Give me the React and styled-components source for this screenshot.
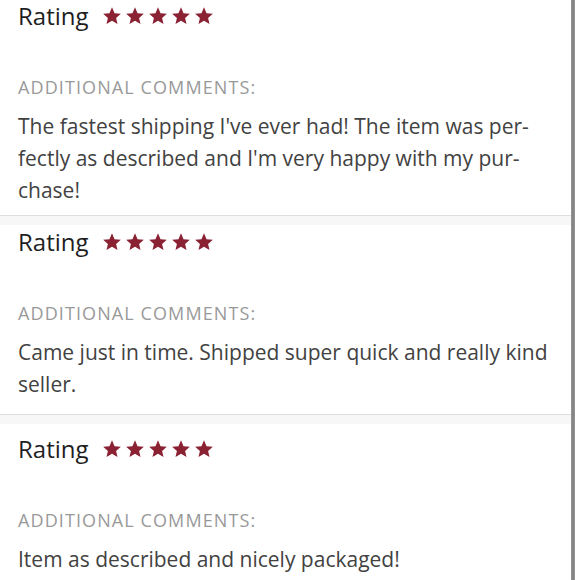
import React from "react";
import styled, { createGlobalStyle } from "styled-components";

const Global = createGlobalStyle`
  html, body { margin: 0; padding: 0; background: #ffffff; }
  body { font-family: "Open Sans", "Liberation Sans", sans-serif; overflow: hidden; }
`;

const Page = styled.div`
  display: flex;
  align-items: flex-start;
  width: 580px;
  height: 580px;
  overflow: hidden;
  background: #ffffff;
`;

const List = styled.div`
  width: 571px;
  flex: none;
  display: flex;
  flex-direction: column;
  & > * { flex-shrink: 0; }
`;

const Rail = styled.div`
  width: 4px;
  height: 580px;
  flex: none;
  background: linear-gradient(to right, #9a9a9a, #7e7e7e 50%, #9a9a9a);
`;

const Card = styled.section`
  padding: ${(p) => p.$top || 0}px 18px ${(p) => p.$bottom || 0}px 18px;
  background: #ffffff;
`;

const Separator = styled.div`
  height: 9px;
  border-top: 1px solid #dedede;
  background: #f7f7f7;
`;

const RatingRow = styled.div`
  display: flex;
  align-items: center;
  height: 32px;
`;

const RatingLabel = styled.span`
  font-size: 24px;
  line-height: 32px;
  color: #1f1f1f;
  margin-right: 13px;
`;

const Stars = styled.div`
  display: flex;
  gap: 3px;
`;

const Label = styled.div`
  margin-top: 43px;
  font-size: 18px;
  font-weight: 500;
  line-height: 24px;
  letter-spacing: 1.1px;
  color: #999999;
  text-transform: uppercase;
  white-space: nowrap;
`;

const Comment = styled.p`
  margin: 11px 0 0 0;
  font-size: 21px;
  line-height: 32px;
  color: #424242;
  white-space: nowrap;
`;

const Star = () => (
  <svg width="20" height="20" viewBox="0 0 24 24" aria-hidden="true">
    <path
      d="M12 1.6l3.05 6.95 7.55.7-5.7 5 1.7 7.4L12 17.75 5.4 21.65l1.7-7.4-5.7-5 7.55-.7z"
      fill="#8a2234"
    />
  </svg>
);

const reviews = [
  {
    lines: [
      "The fastest shipping I've ever had! The item was per-",
      "fectly as described and I'm very happy with my pur-",
      "chase!",
    ],
    top: 0,
    bottom: 9,
  },
  {
    lines: ["Came just in time. Shipped super quick and really kind", "seller."],
    top: 1,
    bottom: 14,
  },
  {
    lines: ["Item as described and nicely packaged!"],
    top: 9,
    bottom: 20,
  },
];

export default function App() {
  return (
    <>
      <Global />
      <Page>
        <List>
          {reviews.map((r, i) => (
            <React.Fragment key={i}>
              {i > 0 && <Separator />}
              <Card $top={r.top} $bottom={r.bottom}>
                <RatingRow>
                  <RatingLabel>Rating</RatingLabel>
                  <Stars>
                    {[0, 1, 2, 3, 4].map((s) => (
                      <Star key={s} />
                    ))}
                  </Stars>
                </RatingRow>
                <Label>Additional comments:</Label>
                <Comment>
                  {r.lines.map((l, j) => (
                    <React.Fragment key={j}>
                      {j > 0 && <br />}
                      {l}
                    </React.Fragment>
                  ))}
                </Comment>
              </Card>
            </React.Fragment>
          ))}
        </List>
        <Rail />
      </Page>
    </>
  );
}
